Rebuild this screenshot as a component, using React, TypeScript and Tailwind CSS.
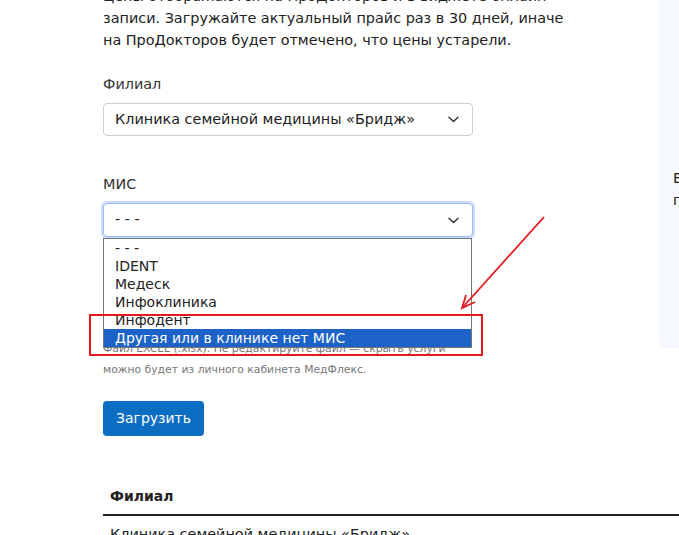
import { ReactNode } from "react";

const misOptions = ["- - -", "IDENT", "Медеск", "Инфоклиника", "Инфодент", "Другая или в клинике нет МИС"];

function Chevron() {
  return (
    <svg width="11" height="7" viewBox="0 0 11 7" fill="none" className="shrink-0">
      <path d="M1 1.2L5.5 5.5L10 1.2" stroke="#333" strokeWidth="1.4" strokeLinecap="round" strokeLinejoin="round" />
    </svg>
  );
}

function Label({ children }: { children: ReactNode }) {
  return <div className="text-[14.4px] leading-[20px] text-[#333]">{children}</div>;
}

export default function App() {
  return (
    <div className="relative min-h-[535px] overflow-hidden bg-white pl-[103px] font-['DejaVu_Sans',sans-serif] text-[#222]">
      <div className="flex items-start">
        {/* main column */}
        <div className="w-[556px] shrink-0">
          <p className="-mt-[15px] text-[14.4px] leading-[22px] text-[#222]">
            Цены отображаются на ПроДокторов и в виджете онлайн
            <br />
            записи. Загружайте актуальный прайс раз в 30 дней, иначе
            <br />
            на ПроДокторов будет отмечено, что цены устарели.
          </p>

          <div className="mt-[23px]">
            <Label>Филиал</Label>
            <div className="mt-[9px] flex h-[33px] w-[370px] items-center justify-between rounded-[4px] border border-[#cfcfcf] pl-[11px] pr-[13px] text-[14.4px]">
              <span>Клиника семейной медицины «Бридж»</span>
              <Chevron />
            </div>
          </div>

          <div className="mt-[38px]">
            <Label>МИС</Label>
            <div className="relative mt-[9px] w-[370px]">
              <div className="flex h-[34px] items-center justify-between rounded-[4px] border border-[#9dbdf3] pl-[11px] pr-[13px] text-[14.4px] shadow-[0_0_0_2px_#c9dafa]">
                <span>- - -</span>
                <Chevron />
              </div>
              {/* open listbox */}
              <ul className="absolute left-0 top-[35px] z-10 w-[369px] border border-[#767676] bg-white text-[14px] leading-[18px]">
                {misOptions.map((o, i) => (
                  <li
                    key={o}
                    className={
                      i === misOptions.length - 1
                        ? "h-[18px] bg-[#1d63c7] pl-[11px] text-white"
                        : "h-[18px] pl-[11px] text-[#222]"
                    }
                  >
                    {o}
                  </li>
                ))}
              </ul>
            </div>
          </div>

          <p className="mt-[101px] text-[10.8px] leading-[21px] text-[#777]">
            Файл EXCEL (.xlsx). Не редактируйте файл — скрыть услуги
            <br />
            можно будет из личного кабинета МедФлекс.
          </p>

          <button className="mt-[21px] h-[35px] w-[101px] rounded-[4px] bg-[#0b6ec3] text-[14px] text-white">
            Загрузить
          </button>
        </div>

        {/* side panel */}
        <div className="h-[348px] flex-1 rounded-bl-[6px] bg-[#f5f8fc] pl-[14px] pt-[167px] text-[14.4px] leading-[22px] text-[#222] whitespace-nowrap">
          В
          <br />п
        </div>
      </div>

      {/* table */}
      <div className="mt-[42px]">
        <div className="border-b-2 border-[#222] px-[7px] py-[8px] text-[14px] font-bold leading-[20px] text-[#222]">Филиал</div>
        <div className="px-[7px] pt-[8px] text-[14.4px] leading-[20px] text-[#222]">Клиника семейной медицины «Бридж»</div>
      </div>

      {/* annotation: red frame + arrow */}
      <div className="pointer-events-none absolute left-[89px] top-[314px] z-20 h-[42px] w-[394px] border-2 border-[#e3191c]" />
      <svg className="pointer-events-none absolute left-0 top-0 z-20" width="679" height="535">
        <line x1="544" y1="217" x2="463" y2="307" stroke="#e3191c" strokeWidth="1.8" />
        <polyline points="475,302 462,308 466,295" fill="none" stroke="#e3191c" strokeWidth="1.8" strokeLinejoin="miter" />
      </svg>
    </div>
  );
}
